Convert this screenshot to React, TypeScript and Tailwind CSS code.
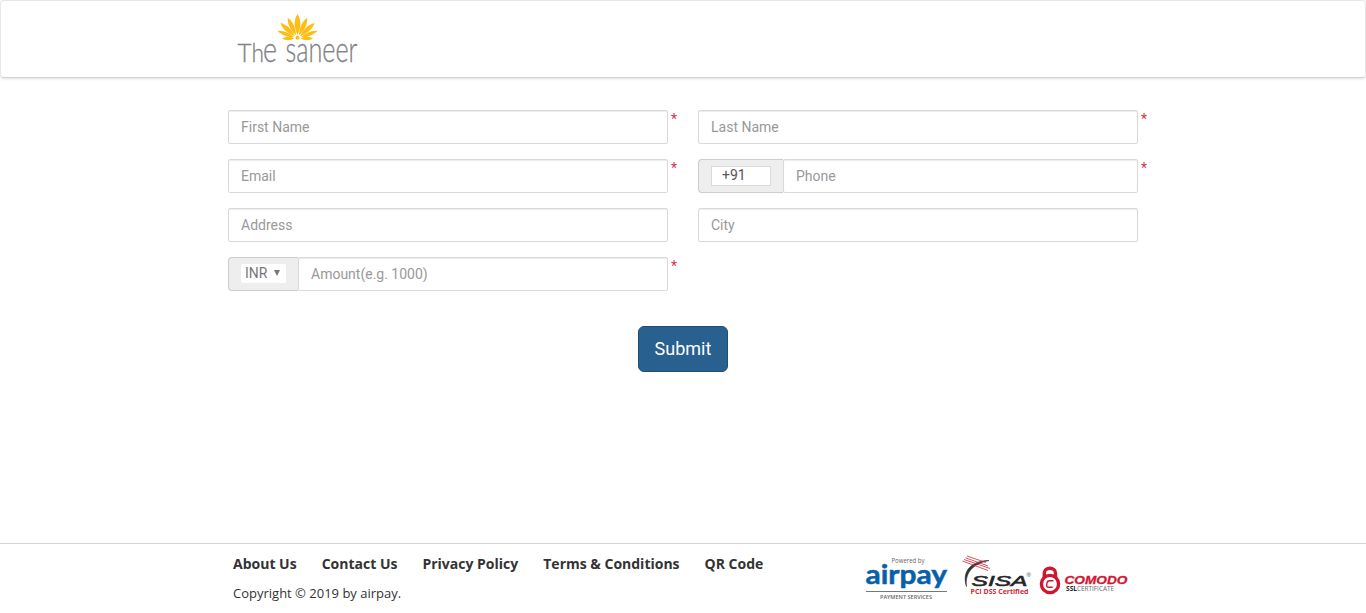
import type { ReactNode } from 'react';

const inputClass =
  "block h-[34px] w-full min-w-0 rounded-[2px] border border-[#d9d9d9] bg-white px-3 font-['Roboto',sans-serif] text-[14px] leading-5 text-[#555] shadow-[inset_0_1px_1px_rgba(0,0,0,0.075)] outline-none placeholder:text-[#999]";

function Field({ required, children }: { required?: boolean; children: ReactNode }) {
  return (
    <div className="relative flex h-[34px]">
      {children}
      {required && (
        <span className="absolute -top-px left-[443px] font-['Roboto',sans-serif] text-[14px] leading-5 text-[#d4344c]">*</span>
      )}
    </div>
  );
}

function SaneerLogo() {
  const petals = [
    { a: 0, l: 24.5, w: 3 },
    { a: -25, l: 23, w: 2.4 },
    { a: 25, l: 23, w: 2.4 },
    { a: -48, l: 23, w: 2.4 },
    { a: 48, l: 23, w: 2.4 },
    { a: -69, l: 21.5, w: 2 },
    { a: 69, l: 21.5, w: 2 },
    { a: -90, l: 15.5, w: 1.8 },
    { a: 90, l: 15.5, w: 1.8 },
  ];
  return (
    <svg width="140" height="76" viewBox="228 1 140 76" className="block" aria-label="The saneer">
      <g fill="#fdbd14">
        {petals.map((p) => (
          <path
            key={p.a}
            transform={`translate(297.5 38.5) rotate(${p.a})`}
            d={`M0 -3.5 C${-p.w} ${-p.l * 0.4} ${-p.w * 1.5} ${-p.l * 0.72} 0 ${-p.l} C${p.w * 1.5} ${-p.l * 0.72} ${p.w} ${-p.l * 0.4} 0 -3.5Z`}
          />
        ))}
        <circle cx="297.500" cy="37.800" r="2" />
      </g>
      <g fill="#808285" stroke="#808285" strokeWidth=".3" fontFamily="Lato" fontWeight="300">
        <text x="237.500" y="62" fontSize="25.500" textLength="14" lengthAdjust="spacingAndGlyphs">T</text>
        <text x="251.500" y="62" fontSize="25" textLength="12.500" lengthAdjust="spacingAndGlyphs">h</text>
        <text x="263" y="62" fontSize="35" textLength="14" lengthAdjust="spacingAndGlyphs">e</text>
        <text x="285.500" y="62" fontSize="35" textLength="72" lengthAdjust="spacingAndGlyphs">saneer</text>
      </g>
    </svg>
  );
}

function AirpayLogo() {
  return (
    <svg width="88" height="50" viewBox="862 554 88 50" className="block">
      <text x="891.500" y="562.500" fontFamily="Open Sans" fontSize="6.200" fill="#666" textLength="33" lengthAdjust="spacingAndGlyphs">Powered by</text>
      <text x="865.500" y="584" fontFamily="Lato" fontWeight="700" fontSize="26.500" fill="#0861a8" stroke="#0861a8" strokeWidth=".5" textLength="81.500" lengthAdjust="spacingAndGlyphs">airpay</text>
      <path d="M866 591.500H947" stroke="#777" strokeWidth="1" />
      <text x="880" y="598.500" fontFamily="Open Sans" fontWeight="600" fontSize="5.500" fill="#666" textLength="52" lengthAdjust="spacingAndGlyphs">PAYMENT SERVICES</text>
    </svg>
  );
}

function SisaLogo() {
  return (
    <svg width="76" height="50" viewBox="959 554 76 50" className="block">
      <path d="M989 560.500C973 560.500 961 570 966.500 586.500C965 573 972 564 989 560.500Z" fill="#333" stroke="#333" strokeWidth=".6" />
      <g stroke="#ca2937" strokeWidth=".8" fill="none">
        <path d="M967 556L986 562.500M965.500 557.800L988 566M964 559.500L990 568.500M962.500 561L988 570.500" />
      </g>
      <text x="971.500" y="586" fontFamily="Liberation Sans" fontStyle="italic" fontWeight="400" fontSize="15.500" fill="#262626" stroke="#262626" strokeWidth=".6" textLength="56" lengthAdjust="spacingAndGlyphs">SISA</text>
      <text x="1026.500" y="577" fontFamily="Liberation Sans" fontSize="6" fill="#333">®</text>
      <text x="970.500" y="594" fontFamily="Open Sans" fontWeight="700" fontSize="7" fill="#d12a36" textLength="58" lengthAdjust="spacingAndGlyphs">PCI DSS Certified</text>
    </svg>
  );
}

function ComodoLogo() {
  return (
    <svg width="96" height="50" viewBox="1036 554 96 50" className="block">
      <g fill="none" stroke="#ce1631">
        <path d="M1044.300 578V573A5.300 4.500 0 0 1 1055.500 573V578" strokeWidth="3.400" />
        <circle cx="1050" cy="584" r="8.600" strokeWidth="3.400" />
        <path d="M1053.500 580.700H1049.500Q1047.300 580.700 1047 583L1046.700 585.200Q1046.500 587.300 1048.700 587.300H1052.700" strokeWidth="1.400" />
      </g>
      <text x="1064.500" y="584" fontFamily="Liberation Sans" fontStyle="italic" fontWeight="700" fontSize="11.500" fill="#d01833" stroke="#d01833" strokeWidth=".3" textLength="63" lengthAdjust="spacingAndGlyphs">COMODO</text>
      <text x="1066" y="590.500" fontFamily="Open Sans" fontWeight="700" fontSize="7" fill="#222" textLength="11" lengthAdjust="spacingAndGlyphs">SSL</text>
      <text x="1077" y="590.500" fontFamily="Open Sans" fontSize="7" fill="#666" textLength="37" lengthAdjust="spacingAndGlyphs">CERTIFICATE</text>
    </svg>
  );
}

export default function App() {
  return (
    <div className="flex h-[613px] flex-col overflow-hidden bg-white">
      <header className="h-[78px] shrink-0 rounded-[4px] border border-[#e7e7e7] border-b-[#d2d2d2] pl-[227px] shadow-[0_1px_3px_rgba(0,0,0,0.13)]">
        <SaneerLogo />
      </header>
      <main className="mx-auto w-[910px] flex-1 pt-8">
        <form onSubmit={(e) => e.preventDefault()}>
          <div className="grid grid-cols-[440px_440px] gap-x-[30px] gap-y-[15px]">
            <Field required><input className={inputClass} placeholder="First Name" /></Field>
            <Field required><input className={inputClass} placeholder="Last Name" /></Field>
            <Field required><input className={inputClass} placeholder="Email" /></Field>
            <Field required>
              <div className="w-[85px] shrink-0 rounded-l-[4px] border border-r-0 border-[#ccc] bg-[#eee] pt-1.5 pl-3">
                <input
                  className="block h-5 w-[60px] border border-[#d9d9d9] bg-white px-2.5 pb-0.5 font-['Roboto',sans-serif] text-[14px] leading-4 text-[#555] outline-none"
                  defaultValue="+91"
                />
              </div>
              <input className={inputClass} placeholder="Phone" />
            </Field>
            <Field><input className={inputClass} placeholder="Address" /></Field>
            <Field><input className={inputClass} placeholder="City" /></Field>
            <Field required>
              <div className="w-[70px] shrink-0 rounded-l-[4px] border border-r-0 border-[#ccc] bg-[#eee] pt-1.5 pl-3">
                <button type="button" className="flex h-[19px] w-[45px] items-center rounded-[2px] bg-white pl-1 font-['Roboto',sans-serif] text-[14px] leading-[19px] text-[#777]">
                  INR
                  <svg width="6" height="6" viewBox="0 0 6 6" className="mb-0.5 ml-[7px]" fill="#777"><path d="M0 0H6L3 6Z" /></svg>
                </button>
              </div>
              <input className={inputClass} placeholder="Amount(e.g. 1000)" />
            </Field>
          </div>
          <button className="mx-auto mt-[35px] block h-[46px] w-[90px] rounded-[6px] border border-[#204d74] bg-[#286090] font-['Roboto',sans-serif] text-[18px] leading-6 text-white">
            Submit
          </button>
        </form>
      </main>
      <footer className="h-[70px] shrink-0 border-t border-[#d5d5d5] font-['Open_Sans',sans-serif] text-[#333]">
        <div className="mx-auto flex w-[910px]">
          <div className="w-[634px] shrink-0 pt-2.5 pl-[5px]">
            <nav className="flex gap-[25px] text-[14px] leading-5 font-bold whitespace-nowrap">
              <a>About Us</a>
              <a>Contact Us</a>
              <a>Privacy Policy</a>
              <a>Terms &amp; Conditions</a>
              <a>QR Code</a>
            </nav>
            <p className="mt-[9px] text-[13px] leading-5">Copyright © 2019 by airpay.</p>
          </div>
          <div className="flex pt-2.5">
            <AirpayLogo />
            <div className="ml-[9px]"><SisaLogo /></div>
            <div className="ml-px"><ComodoLogo /></div>
          </div>
        </div>
      </footer>
    </div>
  );
}
